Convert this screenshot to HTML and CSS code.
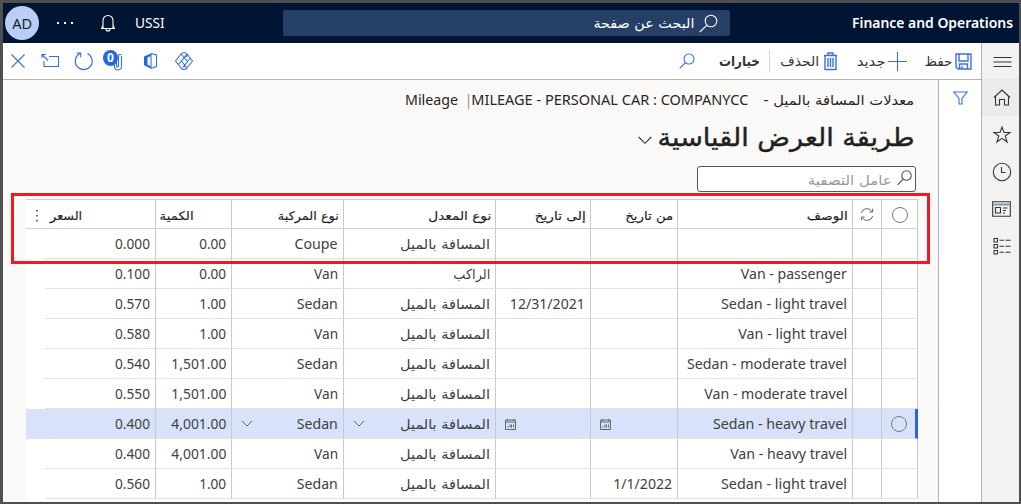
FILE: index.html
```
<!DOCTYPE html>
<html lang="ar">
<head>
<meta charset="utf-8">
<title>Finance and Operations</title>
<link rel="stylesheet" href="styles.css">
</head>
<body>
<div class="app">
  <header class="top">
    <div class="avatar"><span data-w="20">AD</span></div>
    <svg class="dots" width="18" height="4"><g fill="#fff"><rect x="1" y="1" width="2" height="2"/><rect x="8" y="1" width="2" height="2"/><rect x="15" y="1" width="2" height="2"/></g></svg>
    <svg class="bell" width="16" height="18" viewBox="0 0 16 18" fill="none" stroke="#fff" stroke-width="1.3"><path d="M1 14.5h14M3 14.500V6.500a5 5 0 0 1 10 0v8M3 11.500l-1.500 3M13 11.500l1.500 3M6 15a2 2 0 0 0 4 0"/></svg>
    <span class="company from-left" data-w="29">USSI</span>
    <div class="search"><span class="ar" dir="rtl" data-w="101">البحث عن صفحة</span>
      <svg width="19" height="19" viewBox="0 0 19 19" fill="none" stroke="#fff" stroke-width="1.4"><circle cx="12" cy="7" r="5.800"/><path d="M8 11.200L.8 18"/></svg></div>
    <b class="product" data-w="161">Finance and Operations</b>
  </header>
  <div class="body">
    <div class="workspace">
      <div class="toolbar">
        <svg class="t-close" width="14" height="14" viewBox="0 0 14 14"><path d="M.5.500l13 13M13.500.500l-13 13"/></svg>
        <svg class="t-pop" width="19" height="16" viewBox="0 0 19 16"><path d="M8 3.500h9.500v10H3V8M7 7.500L1 1.500M1 5V1.500h4"/></svg>
        <svg class="t-refresh" width="20" height="20" viewBox="0 0 20 20"><path d="M13.500 2.500A8.500 8.500 0 1 1 6 2.500M2.500 2h4.200v4.200"/></svg>
        <div class="attach"><svg width="22" height="22" viewBox="0 0 22 22"><path d="M18.500 6v10.500a3.500 3.500 0 0 1-7 0V7M15.500 6v10.500M13.500 7v9a1 1 0 0 0 2 0V5a2 2 0 0 1 3 0"/></svg><b class="count">0</b></div>
        <svg class="t-office" width="15" height="18" viewBox="0 0 15 18"><path d="M8 1.500l5.500 1.500v11.500L8 16.500M8 1.500v15"/><path class="solid" d="M1 4.500L8 1.500v2.500L4.500 5.500v7L8 14.500v2L4.500 15 1 13z" stroke="none"/></svg>
        <svg class="t-diamond" width="20" height="20" viewBox="0 0 20 20"><path d="M1.500 10L7 3q3-3 6 0l5.500 7L13 17q-3 3-6 0zM7 3l6.500 7.500L9 16.500M13 3l-5.500 7 5 6.500M10 6.500l4-2M13.500 10.500l3-3.500M7.500 10L4 14"/></svg>
        <svg class="t-find" width="16" height="16" viewBox="0 0 16 16"><circle cx="10" cy="6" r="5"/><path d="M6.500 9.500L.7 15.300"/></svg>
        <b class="t-options ar" dir="rtl" data-w="41">خيارات</b>
        <i class="rule"></i>
        <span class="t-delete ar" dir="rtl" data-w="39">الحذف</span>
        <svg class="t-trash" width="15" height="19" viewBox="0 0 15 19"><path d="M1 3.500h13M5 3V1h5v2M2 3.500v14h11v-14M5 6v9M7.500 6v9M10 6v9" stroke-width="1.400"/></svg>
        <span class="t-new ar" dir="rtl" data-w="29">جديد</span>
        <svg class="t-plus" width="19" height="19" viewBox="0 0 19 19"><path d="M9.500 0v19M0 9.500h19"/></svg>
        <span class="t-savetext ar" dir="rtl" data-w="28">حفظ</span>
        <svg class="t-save" width="17" height="17" viewBox="0 0 17 17"><path d="M1 1h15v15H3l-2-2zM4 1v7h9V1M4.500 16v-5h8v5M7 16v-3" stroke-width="1.400"/></svg>
      </div>
      <div class="page">
        <main>
          <div class="crumbs" dir="rtl"><span class="ar c1" data-w="141">معدلات المسافة بالميل</span><span class="c2" data-w="5">-</span><span class="c3" dir="ltr" data-w="277">MILEAGE - PERSONAL CAR : COMPANYCC</span><span class="bar" data-w="4">|</span><span class="c4" data-w="53">Mileage</span></div>
          <div class="view" dir="rtl"><h1 class="ar" data-w="257">طريقة العرض القياسية</h1><svg width="14" height="9" viewBox="0 0 14 9"><path d="M.7 1l6.300 6.300L13.300 1"/></svg></div>
          <div class="filter" dir="rtl"><svg width="15" height="16" viewBox="0 0 15 16"><circle cx="9.500" cy="5.500" r="4.700"/><path d="M6.200 9L.7 14.800"/></svg><span class="ar" data-w="84">عامل التصفية</span></div>
          <div class="grid">
            <div class="row head">
              <div class="price"><svg width="4" height="14" viewBox="0 0 4 14"><path d="M1.200 1h1.600v1.600H1.200zM1.200 6h1.600v1.600H1.200zM1.200 11h1.600v1.600H1.200z"/></svg><span class="ar" dir="rtl" data-w="32">السعر</span></div>
              <div class="qty"><span class="ar" dir="rtl" data-w="34">الكمية</span></div>
              <div><span class="ar" dir="rtl" data-w="61">نوع المركبة</span></div>
              <div><span class="ar" dir="rtl" data-w="63">نوع المعدل</span></div>
              <div><span class="ar" dir="rtl" data-w="51">إلى تاريخ</span></div>
              <div><span class="ar" dir="rtl" data-w="48">من تاريخ</span></div>
              <div><span class="ar" dir="rtl" data-w="41">الوصف</span></div>
              <div class="mid"><svg width="14" height="13" viewBox="0 0 14 13"><path class="line" d="M1.300 5A5.800 5.800 0 0 1 12 3.500M12.700 8A5.800 5.800 0 0 1 2 9.500M12.500.8v3.200H9.300M1.500 12.200V9h3.200"/></svg></div>
              <div class="mid"><i class="radio"></i></div>
            </div>
            <div class="row"><div><span data-w="35">0.000</span></div><div><span data-w="27">0.00</span></div><div><span data-w="43">Coupe</span></div><div><span class="ar" dir="rtl" data-w="90">المسافة بالميل</span></div><div></div><div></div><div></div><div></div><div></div></div>
            <div class="row"><div><span data-w="35">0.100</span></div><div><span data-w="27">0.00</span></div><div><span data-w="24">Van</span></div><div><span class="ar" dir="rtl" data-w="37">الراكب</span></div><div></div><div></div><div><span data-w="106">Van - passenger</span></div><div></div><div></div></div>
            <div class="row"><div><span data-w="35">0.570</span></div><div><span data-w="27">1.00</span></div><div><span data-w="41">Sedan</span></div><div><span class="ar" dir="rtl" data-w="90">المسافة بالميل</span></div><div><span data-w="75">12/31/2021</span></div><div></div><div><span data-w="126">Sedan - light travel</span></div><div></div><div></div></div>
            <div class="row"><div><span data-w="35">0.580</span></div><div><span data-w="27">1.00</span></div><div><span data-w="24">Van</span></div><div><span class="ar" dir="rtl" data-w="90">المسافة بالميل</span></div><div></div><div></div><div><span data-w="109">Van - light travel</span></div><div></div><div></div></div>
            <div class="row"><div><span data-w="35">0.540</span></div><div><span data-w="55">1,501.00</span></div><div><span data-w="41">Sedan</span></div><div><span class="ar" dir="rtl" data-w="90">المسافة بالميل</span></div><div></div><div></div><div><span data-w="160">Sedan - moderate travel</span></div><div></div><div></div></div>
            <div class="row"><div><span data-w="35">0.550</span></div><div><span data-w="55">1,501.00</span></div><div><span data-w="24">Van</span></div><div><span class="ar" dir="rtl" data-w="90">المسافة بالميل</span></div><div></div><div></div><div><span data-w="143">Van - moderate travel</span></div><div></div><div></div></div>
            <div class="row selected"><div><span data-w="35">0.400</span></div><div><span data-w="55">4,001.00</span></div>
              <div class="pick"><svg width="12" height="8" viewBox="0 0 12 8"><path class="line" d="M1 1l5 5 5-5"/></svg><span data-w="41">Sedan</span></div>
              <div class="pick"><svg width="12" height="8" viewBox="0 0 12 8"><path class="line" d="M1 1l5 5 5-5"/></svg><span class="ar" dir="rtl" data-w="90">المسافة بالميل</span></div>
              <div class="pick"><svg width="11" height="11" viewBox="0 0 11 11"><path class="line" d="M.5 1h10v9.500H.500zM.5 3h10M2.500 0v2M8.500 0v2M3 8.500V7M5 8.500V5.500M6.500 8.500v-3M8.500 8.500v-3"/></svg></div>
              <div class="pick"><svg width="11" height="11" viewBox="0 0 11 11"><path class="line" d="M.5 1h10v9.500H.500zM.5 3h10M2.500 0v2M8.500 0v2M3 8.500V7M5 8.500V5.500M6.500 8.500v-3M8.500 8.500v-3"/></svg></div>
              <div><span data-w="134">Sedan - heavy travel</span></div><div></div><div class="mid"><i class="radio"></i></div></div>
            <div class="row"><div><span data-w="35">0.400</span></div><div><span data-w="55">4,001.00</span></div><div><span data-w="24">Van</span></div><div><span class="ar" dir="rtl" data-w="90">المسافة بالميل</span></div><div></div><div></div><div><span data-w="117">Van - heavy travel</span></div><div></div><div></div></div>
            <div class="row"><div><span data-w="35">0.560</span></div><div><span data-w="27">1.00</span></div><div><span data-w="41">Sedan</span></div><div><span class="ar" dir="rtl" data-w="90">المسافة بالميل</span></div><div></div><div><span data-w="59">1/1/2022</span></div><div><span data-w="126">Sedan - light travel</span></div><div></div><div></div></div>
          </div>
        </main>
        <aside class="filters"><svg width="15" height="14" viewBox="0 0 15 14"><path d="M.8 1h13.400L9 7.500v5.500H6V7.500z"/></svg></aside>
      </div>
    </div>
    <nav class="rail">
      <div class="menu"><svg width="19" height="12" viewBox="0 0 19 12"><path d="M.5 1.500h18M.5 6h18M.5 10.500h18"/></svg></div>
      <div class="home"><svg width="18" height="17" viewBox="0 0 18 17"><path d="M1 8.500L9 1l8 7.500M2.500 7.500V16H6.500v-5.500h5V16h4V7.500"/></svg></div>
      <div><svg width="18" height="17" viewBox="0 0 18 17"><path d="M9 1l2 5.500h6l-4.800 3.500 1.900 6L9 12.400 3.900 16l1.900-6L1 6.500h6z"/></svg></div>
      <div><svg width="20" height="20" viewBox="0 0 20 20"><circle cx="10" cy="10" r="8.700"/><path d="M9.500 5v5.500h4"/></svg></div>
      <div><svg width="19" height="16" viewBox="0 0 19 16"><path stroke="#8a979d" stroke-width="2" d="M1.500 3.500h16"/><path d="M.7.700h17.600v14.600H.700zM3.500 6.500h5v5.500h-5zM11 7h4.500M11 9.500h3M11 12h2"/></svg></div>
      <div><svg width="18" height="18" viewBox="0 0 18 18"><path d="M1 1.500h3.500V5H1zM1 7.500h3.500V11H1zM1 13.500h3.500V17H1zM6.500 3.200h4.500M12.500 3.200h5M6.500 9.200h4.500M12.500 9.200h5M6.500 15.200h4.500M12.500 15.200h5"/></svg></div>
    </nav>
  </div>
  <div class="callout"></div>
</div>
<script src="fit.js"></script>
</body>
</html>
```
FILE: styles.css
```
* { box-sizing: border-box; }
body {
  margin: 0;
  color: #404040;
  font: 13.7px/20px "Noto Sans", "Open Sans", "DejaVu Sans", sans-serif;
}
svg { flex: none; display: block; overflow: visible; fill: none; stroke-width: 1.1; }
.ar { font-family: "DejaVu Sans", sans-serif; }
[data-w] { display: inline-block; flex: none; white-space: nowrap; transform-origin: right center; }
.from-left { transform-origin: left center; }

.app {
  position: relative;
  width: 1021px;
  height: 504px;
  display: flex;
  flex-direction: column;
  overflow: hidden;
  border: 3px solid #4f4f4f;
  border-width: 3px 2px 2px 3px;
}

.top { flex: none; display: flex; align-items: center; height: 40px; background: #001433; color: #fff; }
.avatar {
  display: flex; justify-content: center; align-items: center;
  width: 34px; height: 34px; margin: 0 0 0 2px;
  border-radius: 50%; background: #b9cdf7; color: #222; font-size: 15px;
}
.avatar span { transform-origin: center; }
.dots { margin-left: 17px; }
.bell { margin-left: 26px; }
.company { width: 29px; margin-left: 19px; }
.search {
  display: flex; justify-content: flex-end; align-items: center; gap: 5px;
  width: 447px; height: 26px; margin-left: 119px; padding-right: 12px;
  border-radius: 2px; background: #263f66;
}
.product { margin-left: auto; margin-right: 5px; font-weight: 600; font-size: 14px; }

.body { flex: 1; display: flex; min-height: 0; }
.workspace { width: 978px; display: flex; flex-direction: column; }
.toolbar {
  flex: none; display: flex; align-items: center; height: 37px;
  border-bottom: 1px solid #b5b3b1; background: #fff; color: #333;
}
.toolbar svg, .filters svg { stroke: #3b6fe0; }
.toolbar .solid { fill: #2266e3; stroke: none; }
.t-close { margin-left: 8px; }
.t-pop { margin-left: 16px; }
.t-refresh { margin-left: 14px; }
.attach { position: relative; margin: 0 0 1px 9px; }
.count {
  position: absolute; left: 0; top: 0; width: 15px; height: 16px;
  border-radius: 50%; background: #2266e3; color: #fff;
  font-size: 12px; line-height: 16px; text-align: center;
}
.t-office { margin-left: 18px; }
.t-diamond { margin-left: 16px; }
.t-find { margin-left: 485px; }
.t-options { margin-left: 24px; }
.rule { width: 1px; height: 22px; margin-left: 9px; background: #d5d5d5; }
.t-delete { margin-left: 10px; }
.t-trash { margin-left: 4px; }
.t-new { margin-left: 19px; }
.t-plus { margin-left: 2px; }
.t-savetext { margin-left: 17px; }
.t-save { margin-left: 3px; }

.page { flex: 1; display: flex; min-height: 0; }
main { width: 935px; padding: 10px 21px 0 23px; background: #faf9f8; }
.filters { width: 43px; padding: 11px 0 0 14px; border-left: 1px solid #b5b3b1; background: #fff; }

.crumbs { display: flex; height: 20px; padding-right: 3px; color: #262626; }
.c2 { margin-right: 5px; }
.c3 { margin-right: 15px; }
.c4 { margin-right: 9px; }
.view { display: flex; align-items: center; height: 40px; margin-top: 8px; padding-right: 3px; }
.view h1 { margin: 0; color: #201f1e; font-size: 25px; font-weight: 500; line-height: 40px; -webkit-text-stroke: .4px #201f1e; }
.view svg { margin: 4px 5px 0 0; stroke: #323150; }
.filter {
  display: flex; align-items: center; gap: 5px;
  width: 219px; height: 26px; margin: 8px 1px 0 auto; padding-right: 3px;
  border: 1px solid #555; border-radius: 3px; background: #fff; color: #999;
}
.filter svg { stroke: #555; margin-bottom: 2px; }
.filter span { padding-top: 2px; }

.grid { height: 310px; margin: 7px 0 0; width: 892px; border-top: 1px solid #d0d0d0; background: #fff; }
.row { display: grid; grid-template-columns: 130px 76px 112px 152px 95px 87px 175px 29px 36px; height: 30px; }
.row > div {
  display: flex; align-items: center; justify-content: flex-end;
  min-width: 0; padding-right: 5px; padding-top: 1px;
  border-right: 1px solid #c9c9c9; border-bottom: 1px solid #e2e2e2;
}
.row:not(.head) > div:first-child {
  padding-bottom: 1px;
  border-bottom: 0;
  background: linear-gradient(#e2e2e2, #e2e2e2) 19px 100% / 111px 1px no-repeat;
}
.head { height: 29px; color: #201f1e; font-size: 12px; -webkit-text-stroke: .15px #201f1e; }
.row.head > div { padding-top: 3px; padding-right: 4px; border-bottom-color: #d0d0d0; }
.row.head > .price { justify-content: flex-start; padding-left: 9px; gap: 11px; }
.row.head > .qty { padding-right: 37px; }
.price svg { fill: #444; }
.row > .mid, .row.head > .mid { justify-content: center; padding: 1px 0 0; }
.line { stroke: #666; stroke-width: 1; }
.radio { width: 16px; height: 16px; border: 1px solid #777; border-radius: 50%; }
.row.selected { background: #d8e3fb; }
.row > .pick { justify-content: space-between; padding-left: 9px; }
.selected > div:last-child { border-right: 3px solid #2266e3; }

.rail { width: 38px; border-left: 1px solid #b5b3b1; background: #f3f2f1; }
.rail div { display: flex; align-items: center; justify-content: center; height: 37px; padding-left: 2px; }
.rail svg { stroke: #30363a; }
.rail .menu { height: 35px; padding: 3px 0 0 3px; }
.rail .home { background: #edebe9; height: 38px; }

.callout { position: absolute; left: 8px; top: 190px; width: 919px; height: 71px; border: 3px solid #ed1c24; }
```
FILE: fit.js
```
for (const el of document.querySelectorAll("[data-w]")) {
  const natural = el.getBoundingClientRect().width;
  const wanted = Number(el.dataset.w);
  const scale = wanted / natural;
  const extra = wanted - natural;
  el.style.transform = `scaleX(${scale})`;
  const origin = getComputedStyle(el).transformOrigin;
  if (el.parentElement.classList.contains("avatar")) continue;
  if (origin.startsWith("0px")) el.style.width = `${natural}px`;
  else el.style.marginLeft = `${parseFloat(getComputedStyle(el).marginLeft) + extra}px`;
}
```
